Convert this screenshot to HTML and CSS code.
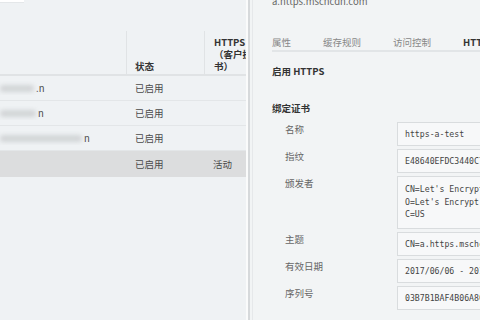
FILE: index.html
```html
<!DOCTYPE html>
<html lang="zh-CN">
<head>
<meta charset="utf-8">
<title>HTTPS</title>
<link rel="stylesheet" href="styles.css">
</head>
<body>
<div class="page">
  <section class="list">
    <div class="search"></div>
    <div class="thead">
      <div class="th"></div>
      <div class="th">状态</div>
      <div class="th">HTTPS 证书<br>（客户提供证<br>书）</div>
    </div>
    <div class="row">
      <div class="td name"><span class="blob b1"></span><span>.n</span></div>
      <div class="td">已启用</div>
      <div class="td"></div>
    </div>
    <div class="row">
      <div class="td name"><span class="blob b2"></span><span>n</span></div>
      <div class="td">已启用</div>
      <div class="td"></div>
    </div>
    <div class="row">
      <div class="td name"><span class="blob b3"></span><span>n</span></div>
      <div class="td">已启用</div>
      <div class="td"></div>
    </div>
    <div class="row sel">
      <div class="td name"></div>
      <div class="td">已启用</div>
      <div class="td">活动</div>
    </div>
  </section>
  <div class="split"></div>
  <section class="detail">
    <div class="url">a.https.mschcdn.com</div>
    <nav class="tabs">
      <span class="tab">属性</span>
      <span class="tab">缓存规则</span>
      <span class="tab">访问控制</span>
      <span class="tab on">HTTPS</span>
    </nav>
    <div class="h h1">启用 HTTPS</div>
    <div class="h h2">绑定证书</div>
    <div class="form">
      <div class="label">名称</div>
      <div class="box">https-a-test</div>
      <div class="label">指纹</div>
      <div class="box">E48640EFDC3440C7A1B2</div>
      <div class="label">颁发者</div>
      <div class="box multi">CN=Let's Encrypt Authority X3<br>O=Let's Encrypt<br>C=US</div>
      <div class="label">主题</div>
      <div class="box">CN=a.https.mschcdn.com</div>
      <div class="label">有效日期</div>
      <div class="box">2017/06/06 - 2017/09/04</div>
      <div class="label">序列号</div>
      <div class="box">03B7B1BAF4B06A8C21</div>
    </div>
  </section>
</div>
</body>
</html>
```

FILE: styles.css
```css
* {
  box-sizing: border-box;
  margin: 0;
  padding: 0;
}

html,
body {
  width: 480px;
  height: 320px;
  overflow: hidden;
}

body {
  font-family: "Noto Sans CJK SC", "Noto Sans", sans-serif;
  font-size: 9.5px;
  color: #4a4a4a;
  background: #f2f4f5;
}

.page {
  display: flex;
  height: 320px;
}

/* left list */
.list {
  width: 246px;
  flex: none;
  background: #eff2f4;
  overflow: hidden;
}

.search {
  width: 24px;
  height: 3px;
  background: #ffffff;
  border-bottom: 1px solid #e4e7e9;
}

.thead {
  display: grid;
  grid-template-columns: 126px 78px 42px;
  margin-top: 28px;
  height: 45px;
  border-bottom: 2px solid #e0e3e5;
}

.th {
  display: flex;
  flex-direction: column;
  justify-content: flex-end;
  padding: 0 0 2px 8px;
  line-height: 12px;
  color: #333;
  font-weight: 600;
  white-space: nowrap;
  overflow: hidden;
}

.th + .th {
  border-left: 1px solid #e0e3e5;
}

.th:last-child {
  padding-left: 9px;
}

.row {
  display: grid;
  grid-template-columns: 126px 78px 42px;
  align-items: center;
  height: 25px;
  border-bottom: 1px solid #e3e6e8;
}

.row.sel {
  height: 26px;
  border-bottom: none;
  background: #dcddde;
}

.td {
  padding-left: 9px;
  white-space: nowrap;
  overflow: hidden;
  color: #4a4a4a;
}

.td.name {
  padding-left: 0;
  display: flex;
  align-items: center;
}

.blob {
  display: inline-block;
  height: 7px;
  background: #d2d5d7;
  border-radius: 3px;
  filter: blur(2px);
  margin-right: 2px;
}

.b1 { width: 34px; }
.b2 { width: 36px; }
.b3 { width: 82px; }

.split {
  width: 4px;
  flex: none;
  border-left: 2px solid #fafbfb;
  background: #d6d9db;
}

/* right detail */
.detail {
  flex: 1;
  overflow: hidden;
  padding-left: 22px;
  background: #f2f4f5;
  box-shadow: inset 2px 0 0 #f2f4f5, inset 3px 0 0 #e6e8ea;
}

.url {
  margin-top: -5px;
  line-height: 12px;
  color: #666;
  white-space: nowrap;
}

.tabs {
  display: flex;
  gap: 32px;
  margin-top: 28px;
  line-height: 14px;
  padding-bottom: 1px;
  border-bottom: 2px solid #e2e5e7;
  color: #888;
  white-space: nowrap;
}

.tab {
  flex: none;
}

.tab.on {
  color: #333;
  font-weight: 700;
}

.h {
  font-weight: 700;
  color: #333;
  line-height: 14px;
  white-space: nowrap;
}

.h1 { margin-top: 12px; }
.h2 { margin-top: 23px; }

.form {
  display: grid;
  grid-template-columns: 112px 160px;
  row-gap: 3px;
  align-items: start;
  margin-top: 7px;
  padding-left: 13px;
}

.label {
  line-height: 14px;
  color: #666;
  white-space: nowrap;
}

.box {
  height: 24px;
  border: 1px solid #d9dcde;
  background: #f7f8f9;
  padding: 0 7px;
  font-family: "DejaVu Sans Mono", "Liberation Mono", monospace;
  font-size: 8.2px;
  line-height: 22px;
  color: #444;
  white-space: nowrap;
  overflow: hidden;
}

.box.multi {
  height: 53px;
  line-height: 12.5px;
  padding-top: 6px;
}
```
